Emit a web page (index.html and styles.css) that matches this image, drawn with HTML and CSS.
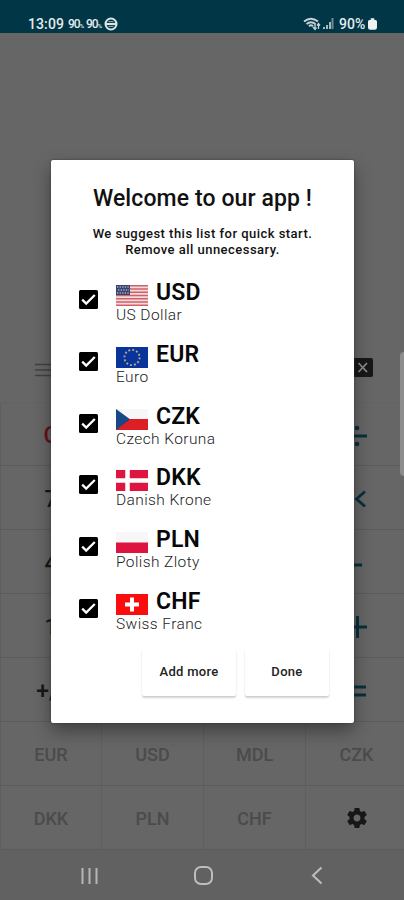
FILE: index.html
```html
<!DOCTYPE html>
<html lang="en">
<head>
<meta charset="utf-8">
<title>Currency calculator</title>
<link rel="stylesheet" href="styles.css">
</head>
<body>
<div class="screen">
  <header class="status">
    <span class="time">13:09</span>
    <span class="speed">90<small>%</small></span>
    <span class="speed">90<small>%</small></span>
    <svg class="globe" width="14" height="14" viewBox="0 0 14 14"><circle cx="7" cy="7" r="5.5" fill="none" stroke="#dce6e9" stroke-width="2"/><path d="M2 7h10" stroke="#dce6e9" stroke-width="2.200"/><path d="M4.500 4.500h5M4.500 9.500h5" stroke="#8ea3a9" stroke-width="1"/></svg>
    <span class="spacer"></span>
    <svg class="wifi" width="18" height="14" viewBox="0 0 18 14"><path d="M1 4.500Q8 -1.200 15 4.500M3.500 7Q8 3.300 12.500 7M6 9.200Q8 7.500 10 9.200" fill="none" stroke="#c5d1d5" stroke-width="1.900"/><path d="M12 7v5M10 10l2 2.500 1.500-2M15.500 12V7M14 8.500l1.500-2 1.500 2" fill="none" stroke="#c5d1d5" stroke-width="1.300"/></svg>
    <svg class="signal" width="11" height="11" viewBox="0 0 11 11"><path d="M0 9h2v2H0zM3 7h2v4H3zM6 4h2v7H6z" fill="#a9b9be"/><path d="M8.500 0h2v11h-2z" fill="#71888f"/></svg>
    <span class="percent">90%</span>
    <svg class="battery" width="9" height="12" viewBox="0 0 10 13"><path d="M3 0h4v2h1.500Q10 2 10 4v6.500Q10 13 7.500 13h-5Q0 13 0 10.500V4Q0 2 1.500 2H3z" fill="#eef3f4"/></svg>
  </header>

  <main class="workspace">
    <div class="toolbar">
      <svg width="24" height="14" viewBox="0 0 24 14"><path d="M0 1.500h24M0 7h24M0 12.500h24" stroke="#414141" stroke-width="1.500"/></svg>
      <svg width="22" height="19" viewBox="0 0 22 19"><rect width="22" height="19" rx="2" fill="#171717"/><path d="M7.500 5l8.500 9M16 5l-8.500 9" stroke="#8b8b8b" stroke-width="1.800"/></svg>
    </div>
    <div class="pad">
      <div class="key red">C</div><div class="key"></div><div class="key"></div><div class="key op"><svg width="22" height="22" viewBox="0 0 22 22"><path d="M1 11h20" stroke="#08303d" stroke-width="3"/><circle cx="11" cy="3" r="2.300" fill="#08303d"/><circle cx="11" cy="19" r="2.300" fill="#08303d"/></svg></div>
      <div class="key">7</div><div class="key"></div><div class="key"></div><div class="key op"><svg width="18" height="18" viewBox="0 0 18 18"><path d="M17 1.500L8.500 9l8.500 7.500" fill="none" stroke="#08303d" stroke-width="2.800"/></svg></div>
      <div class="key">4</div><div class="key"></div><div class="key"></div><div class="key op"><svg width="10" height="20" viewBox="0 0 10 20"><path d="M0 12h10" stroke="#08303d" stroke-width="3"/></svg></div>
      <div class="key">1</div><div class="key"></div><div class="key"></div><div class="key op"><svg width="22" height="22" viewBox="0 0 22 22"><path d="M0 11h21M11.500 0v22" stroke="#08303d" stroke-width="3"/></svg></div>
      <div class="key">+/-</div><div class="key"></div><div class="key"></div><div class="key op"><svg width="18" height="14" viewBox="0 0 18 14"><path d="M0 3h18M0 11h18" stroke="#08303d" stroke-width="2.800"/></svg></div>
      <div class="key currency">EUR</div><div class="key currency">USD</div><div class="key currency">MDL</div><div class="key currency">CZK</div>
      <div class="key currency">DKK</div><div class="key currency">PLN</div><div class="key currency">CHF</div><div class="key currency gear"><svg width="24" height="24" viewBox="0 0 24 24"><path fill="#171717" d="M19.430 12.980c.04-.32.070-.64.070-.98s-.03-.66-.07-.98l2.110-1.650c.19-.15.24-.42.120-.64l-2-3.460c-.12-.22-.39-.3-.61-.22l-2.490 1c-.52-.4-1.080-.73-1.690-.98l-.38-2.650C14.460 2.180 14.250 2 14 2h-4c-.25 0-.46.180-.49.420l-.38 2.650c-.61.250-1.170.590-1.690.980l-2.490-1c-.23-.09-.49 0-.61.220l-2 3.460c-.13.220-.07.490.120.640l2.110 1.650c-.04.320-.07.650-.07.980s.03.660.070.980l-2.110 1.650c-.19.150-.24.420-.12.640l2 3.460c.12.220.39.300.61.220l2.490-1c.52.400 1.080.730 1.690.980l.38 2.650c.03.240.24.420.49.420h4c.25 0 .46-.18.490-.42l.38-2.650c.61-.25 1.170-.59 1.690-.98l2.490 1c.23.090.49 0 .61-.22l2-3.460c.12-.22.070-.49-.12-.64l-2.110-1.650zM12 15.500c-1.930 0-3.500-1.570-3.500-3.500s1.570-3.500 3.500-3.500 3.500 1.570 3.500 3.500-1.570 3.500-3.500 3.500z"/></svg></div>
    </div>
  </main>

  <nav class="nav">
    <svg width="17" height="18" viewBox="0 0 17 18"><path d="M1.500 1v16M8.500 1v16M15.500 1v16" stroke="#b5b5b5" stroke-width="2"/></svg>
    <svg class="home" width="19" height="19" viewBox="0 0 19 19"><rect x="1" y="1" width="17" height="17" rx="6" fill="none" stroke="#bdbdbd" stroke-width="2"/></svg>
    <svg width="12" height="19" viewBox="0 0 12 19"><path d="M10.500 1.500L2 9.500l8.500 8" fill="none" stroke="#bdbdbd" stroke-width="2"/></svg>
  </nav>

  <div class="edge-handle"></div>

  <section class="dialog">
    <h1>Welcome to our app !</h1>
    <p class="intro">We suggest this list for quick start.<br>Remove all unnecessary.</p>
    <ul class="list">
      <li class="row">
        <svg class="check" width="19" height="19" viewBox="0 0 19 19"><rect width="19" height="19" rx="1.500"/><path d="M3.200 9.600l4 4L15.800 5" fill="none" stroke="#fff" stroke-width="2.300"/></svg>
        <div class="info"><div class="head"><svg class="flag" width="32" height="21" viewBox="0 0 32 21"><rect width="32" height="21" fill="#f4dcdc"/><path d="M0 .8h32M0 4h32M0 7.300h32M0 10.500h32M0 13.700h32M0 17h32M0 20.200h32" stroke="#d1606a" stroke-width="1.600"/><rect width="14" height="10" fill="#39446f"/><path d="M1 2h12M2 5h11M1 8h12" stroke="#a9b0cb" stroke-width="1.300" stroke-dasharray="1.300 1.300"/></svg><b>USD</b></div><div class="name">US Dollar</div></div>
      </li>
      <li class="row">
        <svg class="check" width="19" height="19" viewBox="0 0 19 19"><rect width="19" height="19" rx="1.500"/><path d="M3.200 9.600l4 4L15.800 5" fill="none" stroke="#fff" stroke-width="2.300"/></svg>
        <div class="info"><div class="head"><svg class="flag" width="32" height="21" viewBox="0 0 32 21"><rect width="32" height="21" fill="#08349b"/><circle cx="16" cy="10.500" r="7.600" fill="none" stroke="#b4ad80" stroke-width="1.900" stroke-dasharray="1.900 2.080"/></svg><b>EUR</b></div><div class="name">Euro</div></div>
      </li>
      <li class="row">
        <svg class="check" width="19" height="19" viewBox="0 0 19 19"><rect width="19" height="19" rx="1.500"/><path d="M3.200 9.600l4 4L15.800 5" fill="none" stroke="#fff" stroke-width="2.300"/></svg>
        <div class="info"><div class="head"><svg class="flag" width="32" height="21" viewBox="0 0 32 21"><rect width="32" height="21" fill="#f7f7f7"/><path d="M0 10h32v11H0z" fill="#dc1e27"/><path d="M0 0l14 10.300L0 21z" fill="#174785"/></svg><b>CZK</b></div><div class="name">Czech Koruna</div></div>
      </li>
      <li class="row">
        <svg class="check" width="19" height="19" viewBox="0 0 19 19"><rect width="19" height="19" rx="1.500"/><path d="M3.200 9.600l4 4L15.800 5" fill="none" stroke="#fff" stroke-width="2.300"/></svg>
        <div class="info"><div class="head"><svg class="flag" width="32" height="21" viewBox="0 0 32 21"><rect width="32" height="21" fill="#df1440"/><path d="M0 10.500h32M11.500 0v21" stroke="#fff" stroke-width="4.500"/></svg><b>DKK</b></div><div class="name">Danish Krone</div></div>
      </li>
      <li class="row">
        <svg class="check" width="19" height="19" viewBox="0 0 19 19"><rect width="19" height="19" rx="1.500"/><path d="M3.200 9.600l4 4L15.800 5" fill="none" stroke="#fff" stroke-width="2.300"/></svg>
        <div class="info"><div class="head"><svg class="flag" width="32" height="21" viewBox="0 0 32 21"><rect width="32" height="21" fill="#f7f7f7"/><path d="M0 10.500h32V21H0z" fill="#dc143f"/></svg><b>PLN</b></div><div class="name">Polish Zloty</div></div>
      </li>
      <li class="row">
        <svg class="check" width="19" height="19" viewBox="0 0 19 19"><rect width="19" height="19" rx="1.500"/><path d="M3.200 9.600l4 4L15.800 5" fill="none" stroke="#fff" stroke-width="2.300"/></svg>
        <div class="info"><div class="head"><svg class="flag" width="32" height="21" viewBox="0 0 32 21"><rect width="32" height="21" fill="#fa0d0d"/><path d="M9 10.500h14M16 3.500v14" stroke="#fff" stroke-width="4"/></svg><b>CHF</b></div><div class="name">Swiss Franc</div></div>
      </li>
    </ul>
    <div class="actions"><button class="btn more">Add more</button><button class="btn done">Done</button></div>
  </section>
</div>
</body>
</html>
```
FILE: styles.css
```css
* { box-sizing: border-box; }
body { margin: 0; background: #666; font-family: Roboto, sans-serif; }
svg { display: block; flex: none; }
.screen { position: relative; width: 404px; height: 900px; overflow: hidden; display: flex; flex-direction: column; background: #666; }
.status { height: 33px; flex: none; display: flex; align-items: center; padding: 14px 27px 0 28px; background: #003645; color: #e3ebed; }
.time { font-size: 14px; font-weight: 500; width: 40px; letter-spacing: .1px; }
.speed { width: 18px; font-size: 12px; letter-spacing: -1px; white-space: nowrap; font-weight: 500; }
.speed small { font-size: 6px; }
.spacer { flex: 1; }
.signal { margin: 0 5px 0 2px; }
.percent { font-size: 14px; width: 29px; font-weight: 500; }
.workspace { height: 817px; flex: none; display: flex; flex-direction: column; }
.toolbar { height: 369px; flex: none; display: flex; align-items: flex-end; justify-content: space-between; padding: 0 31px 25px 35px; }
.pad { width: 408px; flex: none; display: grid; grid-template-columns: repeat(4, 102px); grid-template-rows: repeat(7, 64px); }
.key { display: flex; align-items: center; justify-content: center; border-right: 1px solid #5f5f5f; border-bottom: 1px solid #5b5b5b; font-size: 23px; font-weight: 500; color: #171717; padding-top: 3px; }
.key:nth-child(4n+1) { border-left: 1px solid #5f5f5f; }
.key:nth-child(-n+4) { border-top: 1px solid #636363; }
.red { color: #67101b; }
.currency { font-size: 18px; color: #4b4b4b; padding-top: 2px; }
.gear { padding-top: 0; }
.nav { height: 50px; background: #616161; display: flex; align-items: center; justify-content: space-between; padding: 1px 81px 0 81px; }
.home { margin-right: 3px; }
.edge-handle { position: absolute; right: -5px; top: 352px; width: 9px; height: 124px; border-radius: 4px; background: #8d8d8d; }
.dialog { position: absolute; left: 51px; top: 160px; width: 303px; height: 563px; border-radius: 2px; background: #fff; box-shadow: 0 0 2px #333, 0 8px 18px rgba(0,0,0,.38); color: #111; }
h1 { margin: 25px 0 0; font-size: 23px; line-height: 28px; font-weight: 500; text-align: center; letter-spacing: .1px; }
.intro { margin: 13px 0 0; font-size: 13px; line-height: 16px; font-weight: 500; text-align: center; letter-spacing: .47px; }
.list { list-style: none; margin: 23px 0 0; padding: 0 0 0 28px; }
.row { display: flex; height: 61.8px; }
.check { margin: 9px 18px 0 0; }
.head { display: flex; height: 25px; gap: 8px; }
.flag { margin-top: 4px; }
.head b { font-size: 23px; line-height: 24px; font-weight: 600; letter-spacing: .2px; color: #080808; }
.name { font-size: 15.500px; line-height: 18px; font-weight: 300; color: #222; letter-spacing: .4px; margin-top: 0; }
.actions { display: flex; gap: 9px; justify-content: flex-end; padding-right: 25px; margin-top: -4px; }
.btn { height: 48px; padding: 0; border: 0; border-radius: 2px; background: #fff; font: 500 13px Roboto, sans-serif; letter-spacing: .3px; color: #222; box-shadow: 0 2px 2px rgba(0,0,0,.16), 0 1px 1px rgba(0,0,0,.05); }
.more { width: 94px; }
.done { width: 84px; }
```
